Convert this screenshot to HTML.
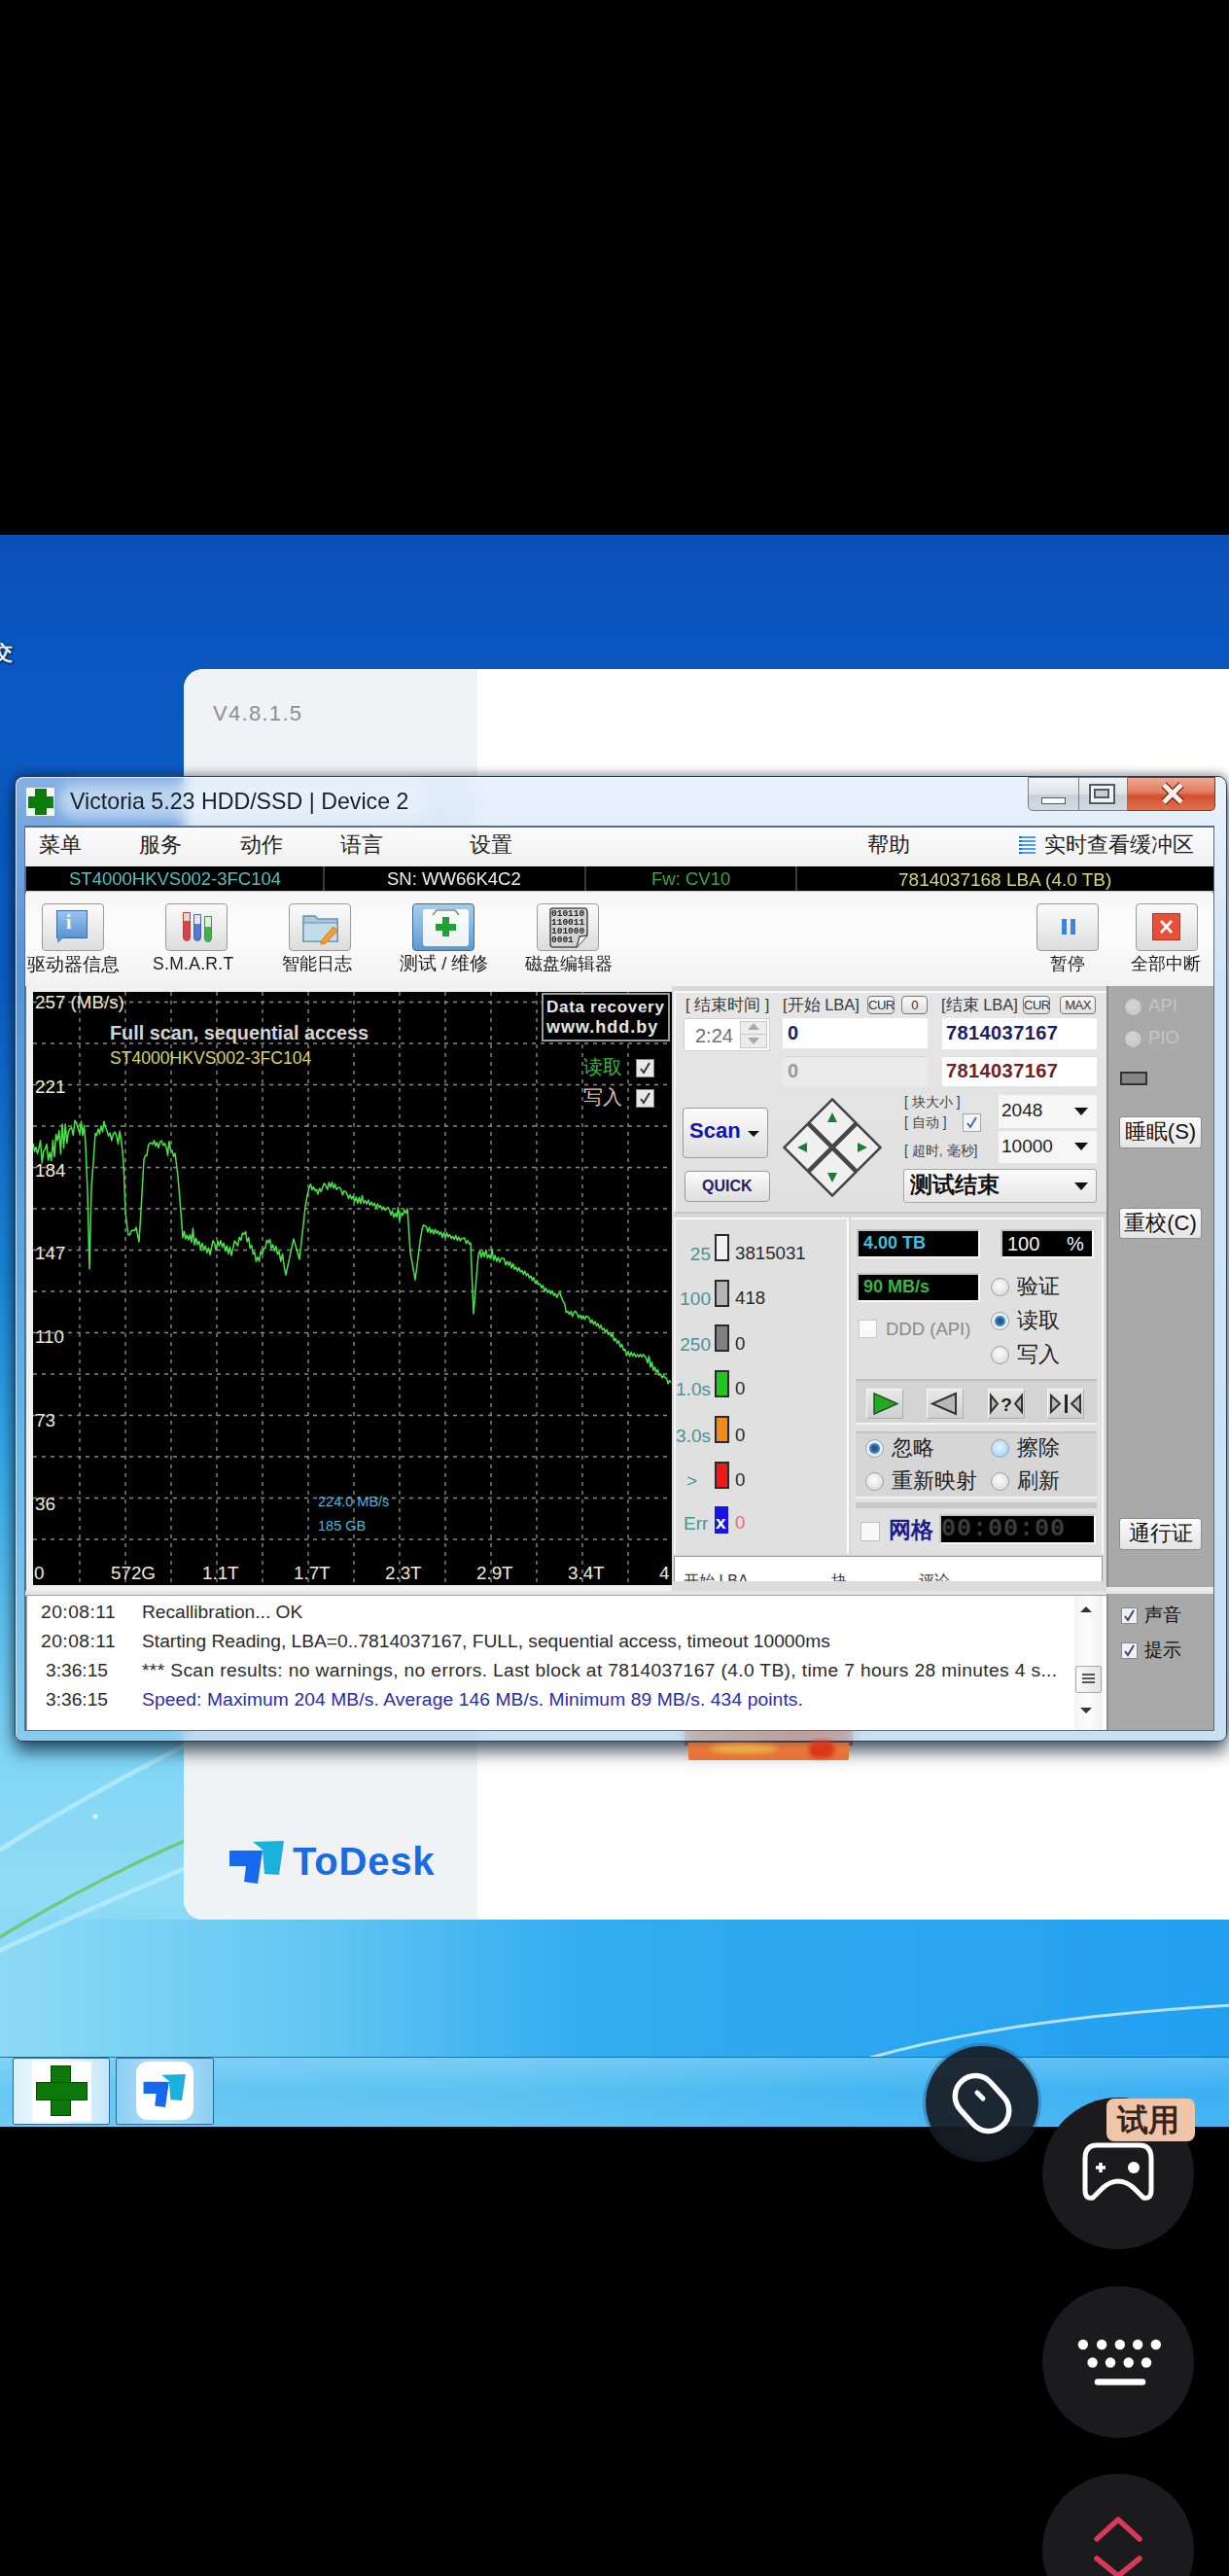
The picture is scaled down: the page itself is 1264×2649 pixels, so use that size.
<!DOCTYPE html>
<html><head><meta charset="utf-8">
<style>
*{margin:0;padding:0;box-sizing:border-box}
html,body{width:1264px;height:2649px;overflow:hidden;background:#000;font-family:"Liberation Sans",sans-serif}
.a{position:absolute}
#desk{position:absolute;left:0;top:550px;width:1264px;height:1637px;overflow:hidden;
background:linear-gradient(180deg,#0a50b8 0px,#0a58c0 150px,#0b5cc4 450px,#1a84d6 750px,#36aae8 950px,#80d6f6 1250px,#90dcf6 1400px,#74d0f4 1500px,#5cc8f4 1565px)}
#card{left:189px;top:688px;width:1100px;height:1286px;border-radius:20px;background:#fff;overflow:hidden}
#cardl{left:0;top:0;width:302px;height:1286px;background:#f0f2f5}
.t{position:absolute;white-space:nowrap;line-height:1}
/* window */
#win{left:15px;top:798px;width:1247px;height:993px;border-radius:9px 9px 8px 8px;
background:linear-gradient(180deg,rgba(218,234,252,.6) 0px,rgba(205,226,248,.56) 52px,rgba(160,202,238,.5) 200px,rgba(145,193,233,.5) 993px);border:1px solid #2c3c4c;backdrop-filter:blur(7px);box-shadow:inset 1px 1px 0 rgba(255,255,255,.7),0 10px 18px rgba(0,20,40,.7),0 -3px 10px rgba(0,0,0,.3)}
#client{left:25px;top:849px;width:1224px;height:931px;background:#f0f0f0;border:2px solid #5c6c7c}
#taskbar{left:0;top:2115px;width:1264px;height:72px;background:linear-gradient(180deg,rgba(255,255,255,.18),rgba(255,255,255,0) 50%,rgba(255,255,255,.06)),linear-gradient(90deg,#66c8f2 0px,#5cc2f2 500px,#44b6f2 900px,#3cb0f2 1264px);border-top:1px solid #2a6c98}
.btn{position:absolute;width:64px;height:49px;border:1px solid #9a9a9a;border-radius:4px;background:linear-gradient(180deg,#fbfbfb,#ececec 50%,#dcdcdc)}
.sb{position:absolute;height:19px;border:1px solid #777;border-radius:4px;background:linear-gradient(180deg,#fafafa,#e0e0e0);font-size:13px;line-height:17px;text-align:center;color:#333;letter-spacing:-0.5px}
.bx{position:absolute;left:735px;width:15px;height:28px;border:2px solid #2a2a2a}
.lcd{position:absolute;background:#000;border:2px solid #c4c4c4;border-right-color:#fafafa;border-bottom-color:#fafafa}
.rd{position:absolute;width:19px;height:19px;border-radius:50%;border:1px solid #a0a0a0;background:radial-gradient(circle at 45% 40%,#fdfdfd,#e0e0e0 70%,#cfcfcf)}
.rd.sel{background:radial-gradient(circle at 50% 50%,#2a5a8a 0 3px,#3a8ad0 4px 5px,#e8f0f8 6px)}
.pb{position:absolute;width:38px;height:31px;background:linear-gradient(180deg,#e8e8e8,#cfcfcf);border:1px solid #b0b0b0;border-top-color:#f8f8f8;border-left-color:#f8f8f8}
.gb{position:absolute;left:1151px;width:85px;border:1px solid #8c8c8c;border-radius:3px;background:linear-gradient(180deg,#fbfbfb,#e4e4e4);font-size:22px;line-height:30px;text-align:center;color:#111}
.circ{position:absolute;border-radius:50%;background:#1b1b1d}
</style></head><body>
<div id="desk">
<div class="a" style="left:0;top:1424px;width:1264px;height:141px;background:linear-gradient(90deg,#8cdaf6 0px,#66c8f2 300px,#34acf0 600px,#22a0f0 1264px)"></div>
<svg class="a" style="left:0;top:1150px" width="1264" height="480" viewBox="0 1700 1264 480">
<path d="M-20 1915 Q80 1850 200 1790" stroke="rgba(220,250,255,.45)" stroke-width="5" fill="none"/><circle cx="98" cy="1868" r="2.5" fill="rgba(255,255,255,.7)"/>
<path d="M-10 1998 Q100 1930 220 1880" stroke="#72c878" stroke-width="3.5" fill="none"/>
<path d="M-10 2010 Q120 1950 230 1905" stroke="rgba(220,250,255,.45)" stroke-width="5" fill="none"/>
<path d="M895 2116 Q1040 2075 1270 2062" stroke="rgba(230,248,255,.75)" stroke-width="3" fill="none"/>
</svg>
</div>
<div class="t" style="left:-7px;top:661px;color:#f0f8ff;font-size:20px;font-weight:700;text-shadow:1px 1px 2px #002050,0 0 3px #002050">交</div>
<div id="card" class="a"><div id="cardl" class="a"></div>
<div class="t" style="left:30px;top:35px;color:#8a9099;font-size:22px;letter-spacing:1.3px">V4.8.1.5</div>
</div>
<div class="a" style="left:704px;top:1740px;width:173px;height:55px;background:linear-gradient(90deg,#e8a878,#e89060 40%,#e87a50 70%,#e89070)"></div>
<div id="win" class="a"></div>
<div id="client" class="a"></div>
<div class="a" style="left:708px;top:1792px;width:165px;height:18px;background:linear-gradient(180deg,#c86a40,#e8783a 40%,#e87038);border-radius:0 0 2px 2px"></div>
<div class="a" style="left:730px;top:1794px;width:70px;height:9px;border-radius:50%;background:#e8b048;filter:blur(2.5px)"></div>
<div class="a" style="left:832px;top:1790px;width:26px;height:18px;border-radius:40%;background:#d83818;filter:blur(2px)"></div>

<!-- title bar -->
<div class="a" style="left:27px;top:810px;width:29px;height:29px;background:#f4f8f4"></div>
<div class="a" style="left:35.5px;top:811px;width:12px;height:27px;background:#0c7a0c"></div>
<div class="a" style="left:28.5px;top:818.5px;width:26px;height:12px;background:#0c7a0c"></div>
<div class="a" style="left:60px;top:806px;width:380px;height:36px;border-radius:18px;background:rgba(235,244,252,.55);filter:blur(6px)"></div>
<div class="t" style="left:72px;top:813px;font-size:23.2px;color:#15202c">Victoria 5.23 HDD/SSD | Device 2</div>
<div class="a" style="left:1057px;top:799px;width:53px;height:35px;border:1px solid #6e7f92;border-radius:0 0 0 5px;background:linear-gradient(180deg,#f2f4f6,#dde2e7 50%,#c8d0d8 51%,#d4dae0)"></div>
<div class="a" style="left:1071px;top:820px;width:25px;height:7px;border:1px solid #4f5e6e;background:#fff"></div>
<div class="a" style="left:1110px;top:799px;width:50px;height:35px;border:1px solid #6e7f92;border-left:none;background:linear-gradient(180deg,#f2f4f6,#dde2e7 50%,#c8d0d8 51%,#d4dae0)"></div>
<div class="a" style="left:1120px;top:806px;width:27px;height:21px;border:2px solid #4f5a66;background:#f0f2f4"></div>
<div class="a" style="left:1125px;top:811px;width:16px;height:10px;border:2px solid #4f5a66;background:#c8ced4"></div>
<div class="a" style="left:1160px;top:799px;width:90px;height:35px;border:1px solid #7a3a2a;border-left:none;border-radius:0 0 5px 0;background:linear-gradient(180deg,#f0a890,#e27a60 45%,#d4502c 55%,#e07050)"></div>
<svg class="a" style="left:1192px;top:803px" width="28" height="26" viewBox="0 0 28 26"><path d="M5 4 L23 22 M23 4 L5 22" stroke="#6a2a1a" stroke-width="7.5" stroke-linecap="butt"/><path d="M5 4 L23 22 M23 4 L5 22" stroke="#f4f0ee" stroke-width="5" stroke-linecap="butt"/></svg>
<!-- menu bar -->
<div class="a" style="left:26px;top:851px;width:1222px;height:40px;background:linear-gradient(180deg,#fbfbfb,#f0f0f0)"></div>
<div class="t" style="left:40px;top:858px;font-size:22px;color:#1e1e1e">菜单</div>
<div class="t" style="left:143px;top:858px;font-size:22px;color:#1e1e1e">服务</div>
<div class="t" style="left:247px;top:858px;font-size:22px;color:#1e1e1e">动作</div>
<div class="t" style="left:350px;top:858px;font-size:22px;color:#1e1e1e">语言</div>
<div class="t" style="left:483px;top:858px;font-size:22px;color:#1e1e1e">设置</div>
<div class="t" style="left:892px;top:858px;font-size:22px;color:#1e1e1e">帮助</div>
<div class="a" style="left:1048px;top:860px;width:17px;height:19px;background:repeating-linear-gradient(180deg,#4aa0e0 0 2px,transparent 2px 4px)"></div>
<div class="a" style="left:1048px;top:860px;width:3px;height:19px;background:repeating-linear-gradient(180deg,#1a70c0 0 2px,transparent 2px 4px)"></div>
<div class="t" style="left:1074px;top:858px;font-size:22px;color:#1e1e1e">实时查看缓冲区</div>
<!-- info bar -->
<div class="a" style="left:27px;top:891px;width:1221px;height:26px;background:#000;border-bottom:1px solid #c8c8c8"></div>
<div class="a" style="left:332px;top:891px;width:2px;height:25px;background:#3a3a3a"></div>
<div class="a" style="left:601px;top:891px;width:2px;height:25px;background:#3a3a3a"></div>
<div class="a" style="left:818px;top:891px;width:2px;height:25px;background:#3a3a3a"></div>
<div class="t" style="left:71px;top:895px;font-size:18.5px;color:#4cc4c4">ST4000HKVS002-3FC104</div>
<div class="t" style="left:398px;top:895px;font-size:18.5px;color:#f0f0f0">SN: WW66K4C2</div>
<div class="t" style="left:670px;top:895px;font-size:18.5px;color:#3ca83c">Fw: CV10</div>
<div class="t" style="left:924px;top:895px;font-size:19px;color:#d6d47a">7814037168 LBA (4.0 TB)</div>
<!-- toolbar -->
<div class="a" style="left:26px;top:918px;width:1222px;height:96px;background:linear-gradient(180deg,#f6f6f6,#fdfdfd 40%,#f2f2f2)"></div>
<div class="btn" style="left:43px;top:929px"></div>
<div class="btn" style="left:170px;top:929px"></div>
<div class="btn" style="left:297px;top:929px"></div>
<div class="btn" style="left:424px;top:929px;background:linear-gradient(180deg,#a8cce8,#7fb4e0 55%,#5a98d0);border-color:#3a6a98"></div>
<div class="btn" style="left:552px;top:929px"></div>
<div class="btn" style="left:1066px;top:929px"></div>
<div class="btn" style="left:1168px;top:929px"></div>
<!-- icons -->
<div class="a" style="left:58px;top:936px;width:32px;height:29px;background:linear-gradient(180deg,#9cc4ee,#5b93d4);border:1px solid #3a6aa8"></div>
<div class="a" style="left:59px;top:963px;width:0;height:0;border-left:8px solid #5b93d4;border-bottom:7px solid transparent"></div>
<div class="t" style="left:68px;top:938px;font-size:20px;font-weight:700;color:#fff;font-family:'Liberation Serif',serif">i</div>
<div class="a" style="left:188px;top:938px;width:8px;height:30px;border-radius:0 0 4px 4px;background:linear-gradient(180deg,#f0d0d0 0 30%,#e04040 30%);border:1px solid #a04848"></div>
<div class="a" style="left:199px;top:940px;width:8px;height:28px;border-radius:0 0 4px 4px;background:linear-gradient(180deg,#e0e8f8 0 35%,#5878d8 35%);border:1px solid #5060a0"></div>
<div class="a" style="left:210px;top:942px;width:8px;height:27px;border-radius:0 0 4px 4px;background:linear-gradient(180deg,#e0f0e0 0 40%,#40b048 40%);border:1px solid #488850"></div>
<svg class="a" style="left:309px;top:936px" width="42" height="36" viewBox="0 0 42 36">
<path d="M3 6 H15 L18 9 H38 V32 H3Z" fill="#a8cadc" stroke="#6a90a8" stroke-width="1.5"/>
<path d="M3 13 H38 V32 H3Z" fill="#c4dce8" stroke="#6a90a8" stroke-width="1.2"/>
<path d="M22 31 L34 17 L38 21 L26 34 L21 35Z" fill="#f0a030" stroke="#c87818" stroke-width="1"/>
</svg>
<div class="a" style="left:435px;top:935px;width:47px;height:38px;background:linear-gradient(180deg,#fdfdfd,#eef0f2);border-radius:3px"></div>
<svg class="a" style="left:435px;top:933px" width="47" height="10"><path d="M10 8 L14 3 H33 L37 8" fill="none" stroke="#7a8a98" stroke-width="1.5"/></svg>
<div class="a" style="left:455px;top:943px;width:7px;height:20px;background:#22a038"></div>
<div class="a" style="left:448px;top:950px;width:21px;height:7px;background:#22a038"></div>
<svg class="a" style="left:563px;top:932px" width="44" height="44" viewBox="0 0 44 44"><path d="M3 4 Q3 2 6 2 H38 Q41 2 41 6 V30 L30 42 H6 Q3 42 3 39Z" fill="#d4d4d4" stroke="#505050" stroke-width="1.6"/><path d="M41 30 L33 31 L30 42" fill="#f4f4f4" stroke="#505050" stroke-width="1.4"/></svg>
<div class="t" style="left:567px;top:935px;font-size:9.5px;line-height:9px;color:#222;font-weight:700;font-family:'Liberation Mono',monospace;white-space:pre">010110
110011
101000
0001</div>
<div class="a" style="left:1092px;top:945px;width:5px;height:16px;background:#3a86d8"></div>
<div class="a" style="left:1101px;top:945px;width:5px;height:16px;background:#3a86d8"></div>
<div class="a" style="left:1185px;top:939px;width:29px;height:28px;background:#e8503a;border:1px solid #c03020"></div>
<svg class="a" style="left:1190px;top:944px" width="19" height="18" viewBox="0 0 19 18"><path d="M4 3 L15 15 M15 3 L4 15" stroke="#fff" stroke-width="2.6"/></svg>
<div class="t" style="left:28px;top:982px;font-size:19px;color:#1a1a1a">驱动器信息</div>
<div class="t" style="left:157px;top:983px;font-size:17.5px;color:#1a1a1a;letter-spacing:0.3px">S.M.A.R.T</div>
<div class="t" style="left:290px;top:982px;font-size:18px;color:#1a1a1a">智能日志</div>
<div class="t" style="left:411px;top:982px;font-size:18.5px;color:#1a1a1a">测试 / 维修</div>
<div class="t" style="left:540px;top:982px;font-size:18px;color:#1a1a1a">磁盘编辑器</div>
<div class="t" style="left:1080px;top:982px;font-size:18px;color:#1a1a1a">暂停</div>
<div class="t" style="left:1163px;top:982px;font-size:18px;color:#1a1a1a">全部中断</div>
<svg class="a" style="left:34px;top:1020px" width="657" height="610" viewBox="0 0 657 610">
<rect width="657" height="610" fill="#000"/>
<g stroke="#8a8a8a" stroke-width="1.4" stroke-dasharray="4 5"><line x1="48" y1="0" x2="48" y2="610"/><line x1="95" y1="0" x2="95" y2="610"/><line x1="142" y1="0" x2="142" y2="610"/><line x1="189" y1="0" x2="189" y2="610"/><line x1="236" y1="0" x2="236" y2="610"/><line x1="283" y1="0" x2="283" y2="610"/><line x1="330" y1="0" x2="330" y2="610"/><line x1="377" y1="0" x2="377" y2="610"/><line x1="424" y1="0" x2="424" y2="610"/><line x1="471" y1="0" x2="471" y2="610"/><line x1="518" y1="0" x2="518" y2="610"/><line x1="565" y1="0" x2="565" y2="610"/><line x1="612" y1="0" x2="612" y2="610"/><line x1="0" y1="10.5" x2="657" y2="10.5"/><line x1="0" y1="53.0" x2="657" y2="53.0"/><line x1="0" y1="95.5" x2="657" y2="95.5"/><line x1="0" y1="138.0" x2="657" y2="138.0"/><line x1="0" y1="180.5" x2="657" y2="180.5"/><line x1="0" y1="223.0" x2="657" y2="223.0"/><line x1="0" y1="265.5" x2="657" y2="265.5"/><line x1="0" y1="308.0" x2="657" y2="308.0"/><line x1="0" y1="350.5" x2="657" y2="350.5"/><line x1="0" y1="393.0" x2="657" y2="393.0"/><line x1="0" y1="435.5" x2="657" y2="435.5"/><line x1="0" y1="478.0" x2="657" y2="478.0"/><line x1="0" y1="520.5" x2="657" y2="520.5"/><line x1="0" y1="563.0" x2="657" y2="563.0"/></g>
<path d="M0.0 156.0 L1.5 164.2 L3.0 159.6 L4.5 166.4 L6.0 160.7 L7.6 152.8 L9.2 175.9 L10.8 164.4 L12.4 161.6 L14.0 156.8 L15.6 173.3 L17.2 165.0 L18.8 173.6 L20.4 152.8 L22.0 169.6 L23.6 146.4 L25.2 152.9 L26.8 142.6 L28.4 166.5 L30.0 136.1 L31.6 160.7 L33.2 135.9 L34.8 155.4 L36.4 143.7 L38.0 140.6 L39.7 139.6 L41.3 147.6 L43.0 132.3 L44.7 134.7 L46.3 140.6 L48.0 145.3 L49.5 132.9 L51.0 147.8 L52.5 137.4 L54.0 156.0 L56.0 205.0 L58.0 285.0 L60.0 202.0 L62.0 175.0 L64.0 145.4 L65.5 147.6 L67.0 140.9 L68.5 145.9 L70.0 137.8 L71.5 144.0 L73.0 133.2 L74.5 139.5 L76.0 142.8 L77.6 148.2 L79.2 145.1 L80.8 152.8 L82.4 146.2 L84.0 144.1 L85.8 147.4 L87.5 156.4 L89.2 143.2 L91.0 155.0 L93.0 175.0 L95.0 226.0 L96.5 240.0 L98.0 249.9 L99.6 249.7 L101.2 245.4 L102.8 245.1 L104.4 245.8 L106.0 242.0 L107.5 249.5 L109.0 257.0 L110.7 229.7 L112.3 202.3 L114.0 172.4 L115.5 168.3 L117.0 168.2 L118.5 157.8 L120.0 155.8 L121.5 155.2 L123.0 156.7 L124.5 152.7 L126.0 158.5 L127.5 154.9 L129.0 160.4 L130.6 154.1 L132.2 153.0 L133.8 157.8 L135.4 155.9 L137.0 159.5 L138.5 168.2 L140.0 153.7 L141.5 162.8 L143.0 163.1 L144.5 169.2 L146.0 166.0 L147.5 178.0 L149.0 190.0 L150.7 210.0 L152.3 230.0 L154.0 252.8 L155.5 246.3 L157.0 254.0 L158.5 250.2 L160.0 255.0 L161.5 249.6 L163.0 257.4 L164.5 243.3 L166.0 260.2 L167.6 253.3 L169.2 259.9 L170.8 256.6 L172.4 264.4 L174.0 258.4 L175.6 265.6 L177.2 261.2 L178.8 268.2 L180.4 263.2 L182.0 270.4 L183.6 262.4 L185.1 255.7 L186.7 259.2 L188.3 265.7 L189.9 256.2 L191.4 261.2 L193.0 255.7 L194.6 262.6 L196.1 258.2 L197.7 266.5 L199.3 260.9 L200.9 269.3 L202.4 262.3 L204.0 271.0 L205.6 264.0 L207.2 255.9 L208.9 258.2 L210.5 261.1 L212.1 252.5 L213.8 255.3 L215.4 247.9 L217.0 249.1 L218.6 246.6 L220.1 256.8 L221.7 252.8 L223.2 263.6 L224.8 260.7 L226.3 269.8 L227.9 267.5 L229.4 277.2 L231.0 272.7 L232.6 277.1 L234.1 267.0 L235.7 269.7 L237.3 263.4 L238.9 263.6 L240.4 255.2 L242.0 257.8 L243.6 254.6 L245.1 264.1 L246.7 260.0 L248.3 266.6 L249.9 261.5 L251.4 269.9 L253.0 267.0 L254.8 277.2 L256.5 269.4 L258.2 282.2 L260.0 291.0 L261.6 283.6 L263.2 276.2 L264.8 268.8 L266.4 261.4 L268.0 254.0 L269.5 259.2 L271.0 264.5 L272.5 269.8 L274.0 275.0 L275.5 261.5 L277.0 248.0 L278.5 234.5 L280.0 221.0 L282.0 209.5 L284.0 201.3 L285.5 197.8 L287.0 203.6 L288.5 200.7 L290.0 204.5 L291.5 203.0 L293.0 208.1 L294.6 201.9 L296.2 205.4 L297.9 200.6 L299.5 196.9 L301.1 198.9 L302.8 203.3 L304.4 196.0 L306.0 201.1 L307.5 195.8 L309.1 201.9 L310.6 197.7 L312.2 203.4 L313.7 201.4 L315.2 201.1 L316.8 203.2 L318.3 208.9 L319.8 204.7 L321.4 205.3 L322.9 207.9 L324.5 212.4 L326.0 208.8 L327.6 212.9 L329.1 210.0 L330.7 215.8 L332.2 210.9 L333.8 217.2 L335.3 211.2 L336.9 217.5 L338.4 209.5 L340.0 217.2 L341.6 214.7 L343.2 218.1 L344.8 214.0 L346.4 219.3 L348.0 216.2 L349.6 219.8 L351.2 217.1 L352.8 222.6 L354.4 218.0 L356.0 221.8 L357.5 219.8 L359.0 223.9 L360.5 221.0 L362.0 224.5 L363.5 223.0 L365.0 221.5 L366.5 224.4 L368.0 229.2 L369.5 225.1 L371.0 231.8 L372.5 227.6 L374.0 231.7 L375.5 221.5 L377.0 235.2 L378.6 227.4 L380.2 229.8 L381.8 224.3 L383.4 227.8 L385.0 223.0 L386.5 245.5 L388.0 268.0 L389.7 277.3 L391.3 286.7 L393.0 296.0 L394.8 282.5 L396.5 269.0 L398.2 255.5 L400.0 244.5 L401.5 239.8 L403.0 240.6 L404.5 241.6 L406.0 247.1 L407.5 241.9 L409.0 247.7 L410.5 244.4 L412.0 248.9 L413.5 244.1 L415.0 248.2 L416.5 245.8 L418.0 249.7 L419.5 246.9 L421.0 252.4 L422.6 247.4 L424.1 252.6 L425.6 247.8 L427.1 252.1 L428.7 249.7 L430.2 253.6 L431.7 251.2 L433.2 254.5 L434.8 250.5 L436.3 255.5 L437.8 252.0 L439.3 256.0 L440.9 253.6 L442.4 253.5 L443.9 253.0 L445.4 258.7 L447.0 255.5 L448.5 259.1 L450.0 258.0 L451.5 294.5 L453.0 331.0 L454.7 310.3 L456.3 289.7 L458.0 270.4 L459.6 266.1 L461.1 272.9 L462.7 267.1 L464.2 272.4 L465.8 265.4 L467.4 273.6 L468.9 270.5 L470.5 274.1 L472.1 264.6 L473.6 276.0 L475.2 271.0 L476.8 277.0 L478.3 273.0 L479.9 278.1 L481.4 273.9 L483.0 274.1 L484.5 274.3 L486.0 280.7 L487.6 277.3 L489.1 280.9 L490.6 277.6 L492.1 284.0 L493.7 279.5 L495.2 285.3 L496.7 283.1 L498.2 286.9 L499.8 283.7 L501.3 287.9 L502.8 286.6 L504.3 290.3 L505.9 287.1 L507.4 291.9 L508.9 289.8 L510.4 294.0 L512.0 292.0 L513.5 296.9 L515.0 293.6 L516.6 299.6 L518.1 296.9 L519.7 300.8 L521.3 300.2 L522.9 304.3 L524.4 301.7 L526.0 307.8 L527.6 304.8 L529.2 309.2 L530.8 306.9 L532.4 310.4 L534.0 307.8 L535.6 312.2 L537.2 310.2 L538.8 314.2 L540.4 310.5 L542.0 309.4 L543.6 314.4 L545.2 318.1 L546.8 320.8 L548.4 329.5 L550.0 328.6 L551.6 331.6 L553.2 328.5 L554.8 333.7 L556.3 329.2 L557.9 328.3 L559.5 331.1 L561.1 335.2 L562.7 332.2 L564.2 336.0 L565.8 333.0 L567.4 336.6 L569.0 333.3 L570.5 334.1 L572.0 335.2 L573.5 340.4 L575.0 337.3 L576.5 341.7 L578.0 339.0 L579.5 343.3 L581.0 341.1 L582.5 345.9 L584.0 342.7 L585.5 347.6 L587.0 345.9 L588.5 350.0 L590.0 347.3 L591.5 352.2 L593.0 350.3 L594.5 354.3 L596.0 351.5 L597.6 358.8 L599.2 356.5 L600.8 361.5 L602.4 358.7 L604.0 365.2 L605.6 362.5 L607.2 368.3 L608.8 367.5 L610.4 373.9 L612.0 370.0 L613.6 374.7 L615.1 370.4 L616.7 374.3 L618.2 371.7 L619.8 375.2 L621.3 372.8 L622.9 375.4 L624.4 372.7 L626.0 375.3 L627.5 372.9 L629.0 374.2 L630.5 377.0 L632.0 381.6 L633.5 374.6 L635.0 386.0 L636.5 380.8 L638.0 389.4 L639.5 385.7 L641.0 391.3 L642.5 388.4 L644.0 394.3 L645.5 392.9 L647.0 396.9 L648.5 394.2 L650.0 397.0 L651.5 397.1 L653.0 402.9 L654.5 399.6 L656.0 402.0" fill="none" stroke="#46e446" stroke-width="1.5" stroke-linejoin="round"/>
</svg>
<div class="t" style="left:36px;top:1022px;font-size:18.8px;color:#f0ecd0">257 (MB/s)</div>
<div class="t" style="left:36px;top:1109px;font-size:18.8px;color:#f0ecd0">221</div>
<div class="t" style="left:36px;top:1195px;font-size:18.8px;color:#f0ecd0">184</div>
<div class="t" style="left:36px;top:1280px;font-size:18.8px;color:#f0ecd0">147</div>
<div class="t" style="left:36px;top:1366px;font-size:18.8px;color:#f0ecd0">110</div>
<div class="t" style="left:36px;top:1452px;font-size:18.8px;color:#f0ecd0">73</div>
<div class="t" style="left:36px;top:1538px;font-size:18.8px;color:#f0ecd0">36</div>
<div class="t" style="left:35px;top:1609px;font-size:18.8px;color:#f0ecd0">0</div>
<div class="t" style="left:114px;top:1609px;font-size:18.8px;color:#f0ecd0">572G</div>
<div class="t" style="left:208px;top:1609px;font-size:18.8px;color:#f0ecd0">1.1T</div>
<div class="t" style="left:302px;top:1609px;font-size:18.8px;color:#f0ecd0">1.7T</div>
<div class="t" style="left:396px;top:1609px;font-size:18.8px;color:#f0ecd0">2.3T</div>
<div class="t" style="left:490px;top:1609px;font-size:18.8px;color:#f0ecd0">2.9T</div>
<div class="t" style="left:584px;top:1609px;font-size:18.8px;color:#f0ecd0">3.4T</div>
<div class="t" style="left:678px;top:1609px;font-size:18.8px;color:#f0ecd0">4</div>
<div class="t" style="left:113px;top:1053px;font-size:19.8px;font-weight:700;color:#d4d4d4">Full scan, sequential access</div>
<div class="t" style="left:113px;top:1080px;font-size:17.6px;color:#d8d464">ST4000HKVS002-3FC104</div>
<div class="a" style="left:557px;top:1021px;width:132px;height:50px;border:2px solid #9a9a9a;background:#000"></div>
<div class="t" style="left:562px;top:1027px;font-size:17px;font-weight:700;color:#e8e8e8;letter-spacing:0.7px">Data recovery</div>
<div class="t" style="left:562px;top:1047px;font-size:18px;font-weight:700;color:#e0e8e0;letter-spacing:1px">www.hdd.by</div>
<div class="t" style="left:600px;top:1087px;font-size:20px;color:#3cb83c">读取</div>
<div class="a" style="left:654px;top:1089px;width:19px;height:19px;background:#e8e8e8;border:1px solid #888"></div>
<svg class="a" style="left:656px;top:1091px" width="15" height="15"><path d="M3 8 L6 12 L12 2" stroke="#333" stroke-width="2" fill="none"/></svg>
<div class="t" style="left:600px;top:1118px;font-size:20px;color:#dcc4bc">写入</div>
<div class="a" style="left:654px;top:1120px;width:19px;height:19px;background:#e8e8e8;border:1px solid #888"></div>
<svg class="a" style="left:656px;top:1122px" width="15" height="15"><path d="M3 8 L6 12 L12 2" stroke="#333" stroke-width="2" fill="none"/></svg>
<div class="t" style="left:327px;top:1537px;font-size:14.5px;color:#4ab8d8">224.0 MB/s</div>
<div class="t" style="left:327px;top:1562px;font-size:14.5px;color:#4ab8d8">185 GB</div>
<!-- right control panel -->
<div class="a" style="left:691px;top:1014px;width:449px;height:622px;background:#d8d8d8"></div>
<div class="a" style="left:693px;top:1019px;width:445px;height:229px;background:linear-gradient(180deg,#e6e6e6,#e0e0e0);border-top:2px solid #f8f8f8;border-left:2px solid #f8f8f8;border-bottom:2px solid #c4c4c4"></div>
<div class="t" style="left:705px;top:1025px;font-size:16.5px;color:#3a3a3a">[ 结束时间 ]</div>
<div class="t" style="left:805px;top:1025px;font-size:16.5px;color:#3a3a3a">[开始 LBA]</div>
<div class="sb" style="left:892px;top:1024px;width:28px">CUR</div>
<div class="sb" style="left:927px;top:1024px;width:27px">0</div>
<div class="t" style="left:968px;top:1025px;font-size:16.5px;color:#3a3a3a">[结束 LBA]</div>
<div class="sb" style="left:1052px;top:1024px;width:28px">CUR</div>
<div class="sb" style="left:1090px;top:1024px;width:37px">MAX</div>
<div class="a" style="left:703px;top:1047px;width:89px;height:34px;background:#fff;border:1px solid #cfcfcf"></div>
<div class="t" style="left:715px;top:1055px;font-size:20px;color:#6e6e6e">2:24</div>
<div class="a" style="left:761px;top:1050px;width:28px;height:28px;background:#ececec;border:1px solid #c8c8c8"></div>
<div class="a" style="left:762px;top:1063px;width:26px;height:1px;background:#c8c8c8"></div>
<div class="a" style="left:769px;top:1052px;width:0;height:0;border-left:6px solid transparent;border-right:6px solid transparent;border-bottom:7px solid #a8a8a8"></div>
<div class="a" style="left:769px;top:1067px;width:0;height:0;border-left:6px solid transparent;border-right:6px solid transparent;border-top:7px solid #a8a8a8"></div>
<div class="a" style="left:805px;top:1047px;width:149px;height:31px;background:#fff"></div>
<div class="t" style="left:810px;top:1052px;font-size:20px;font-weight:700;color:#1c1c64">0</div>
<div class="a" style="left:805px;top:1086px;width:149px;height:31px;background:#ebebeb;border-top:1px solid #d4d4d4"></div>
<div class="t" style="left:810px;top:1091px;font-size:20px;font-weight:700;color:#9a9a9a">0</div>
<div class="a" style="left:969px;top:1047px;width:159px;height:32px;background:#fff"></div>
<div class="t" style="left:973px;top:1052px;font-size:20px;font-weight:700;color:#1c1c64;letter-spacing:0.4px">7814037167</div>
<div class="a" style="left:969px;top:1086px;width:159px;height:31px;background:#fff;border-top:1px solid #dcdcdc"></div>
<div class="t" style="left:973px;top:1091px;font-size:20px;font-weight:700;color:#6a2222;letter-spacing:0.4px">7814037167</div>
<!-- scan / quick -->
<div class="a" style="left:702px;top:1139px;width:88px;height:52px;border:1px solid #9c9c9c;border-radius:4px;background:linear-gradient(180deg,#fdfdfd,#ececec 50%,#dedede)"></div>
<div class="t" style="left:709px;top:1152px;font-size:22px;font-weight:700;color:#1414b4">Scan</div>
<div class="a" style="left:769px;top:1163px;width:0;height:0;border-left:6px solid transparent;border-right:6px solid transparent;border-top:6px solid #111"></div>
<div class="a" style="left:704px;top:1204px;width:88px;height:32px;border:1px solid #9c9c9c;border-radius:4px;background:linear-gradient(180deg,#fdfdfd,#ececec 50%,#dedede)"></div>
<div class="t" style="left:722px;top:1212px;font-size:16px;font-weight:700;color:#22226a">QUICK</div>
<!-- diamond -->
<svg class="a" style="left:805px;top:1129px" width="102" height="102" viewBox="0 0 102 102">
<g transform="rotate(45 51 51)">
<rect x="16" y="16" width="34" height="34" fill="#f0f0f0" stroke="#444" stroke-width="2.5"/>
<rect x="52" y="16" width="34" height="34" fill="#f0f0f0" stroke="#444" stroke-width="2.5"/>
<rect x="16" y="52" width="34" height="34" fill="#f0f0f0" stroke="#444" stroke-width="2.5"/>
<rect x="52" y="52" width="34" height="34" fill="#f0f0f0" stroke="#444" stroke-width="2.5"/>
</g>
<path d="M51 15 L56 25 L46 25Z M51 87 L56 77 L46 77Z M15 51 L25 46 L25 56Z M87 51 L77 46 L77 56Z" fill="#1f7a3a"/>
</svg>
<div class="t" style="left:930px;top:1126px;font-size:14px;color:#444">[ 块大小 ]</div>
<div class="t" style="left:930px;top:1147px;font-size:14px;color:#444">[ 自动 ]</div>
<div class="a" style="left:990px;top:1145px;width:19px;height:19px;background:#f4f4f8;border:1px solid #9aa"></div>
<svg class="a" style="left:992px;top:1147px" width="15" height="15"><path d="M3 8 L6 12 L12 2" stroke="#5068a8" stroke-width="2" fill="none"/></svg>
<div class="t" style="left:930px;top:1176px;font-size:14px;color:#444">[ 超时, 毫秒]</div>
<div class="a" style="left:1027px;top:1126px;width:101px;height:34px;background:#f6f6f6"></div>
<div class="t" style="left:1030px;top:1132px;font-size:19px;color:#222">2048</div>
<div class="a" style="left:1105px;top:1139px;width:0;height:0;border-left:7px solid transparent;border-right:7px solid transparent;border-top:8px solid #111"></div>
<div class="a" style="left:1027px;top:1163px;width:101px;height:33px;background:#f6f6f6"></div>
<div class="t" style="left:1030px;top:1169px;font-size:19px;color:#222">10000</div>
<div class="a" style="left:1105px;top:1175px;width:0;height:0;border-left:7px solid transparent;border-right:7px solid transparent;border-top:8px solid #111"></div>
<div class="a" style="left:929px;top:1202px;width:199px;height:35px;border:1px solid #a8a8a8;border-radius:3px;background:linear-gradient(180deg,#fafafa,#e6e6e6)"></div>
<div class="t" style="left:936px;top:1207px;font-size:23px;font-weight:700;color:#111">测试结束</div>
<div class="a" style="left:1105px;top:1216px;width:0;height:0;border-left:7px solid transparent;border-right:7px solid transparent;border-top:8px solid #111"></div>
<!-- block stats -->
<div class="a" style="left:693px;top:1252px;width:180px;height:346px;background:#e0e0e0;border-top:2px solid #f6f6f6;border-left:2px solid #f6f6f6;border-right:2px solid #fafafa"></div>
<div class="t" style="right:533px;top:1280px;font-size:19px;color:#4a9494">25</div>
<div class="t" style="right:533px;top:1326px;font-size:19px;color:#4a9494">100</div>
<div class="t" style="right:533px;top:1373px;font-size:19px;color:#4a9494">250</div>
<div class="t" style="right:533px;top:1419px;font-size:19px;color:#4a9494">1.0s</div>
<div class="t" style="right:533px;top:1467px;font-size:19px;color:#4a9494">3.0s</div>
<div class="t" style="left:706px;top:1513px;font-size:19px;color:#4a9494">&gt;</div>
<div class="t" style="left:703px;top:1557px;font-size:19px;color:#4a9494">Err</div>
<div class="bx" style="top:1269px;background:#f2f2f2"></div>
<div class="bx" style="top:1316px;background:#b4b4b4"></div>
<div class="bx" style="top:1362px;background:#808080"></div>
<div class="bx" style="top:1409px;background:#1ec81e"></div>
<div class="bx" style="top:1456px;background:#f28a1a"></div>
<div class="bx" style="top:1503px;background:#f01818"></div>
<div class="a" style="left:735px;top:1549px;width:14px;height:28px;background:#1414e6"></div>
<div class="t" style="left:736px;top:1556px;font-size:19px;font-weight:700;color:#fff">x</div>
<div class="t" style="left:756px;top:1280px;font-size:18.7px;color:#2a2a2a">3815031</div>
<div class="t" style="left:756px;top:1326px;font-size:18.7px;color:#2a2a2a">418</div>
<div class="t" style="left:756px;top:1373px;font-size:18.7px;color:#2a2a2a">0</div>
<div class="t" style="left:756px;top:1419px;font-size:18.7px;color:#2a2a2a">0</div>
<div class="t" style="left:756px;top:1467px;font-size:18.7px;color:#2a2a2a">0</div>
<div class="t" style="left:756px;top:1513px;font-size:18.7px;color:#2a2a2a">0</div>
<div class="t" style="left:756px;top:1557px;font-size:18.7px;color:#e87060">0</div>
<!-- right sub panel -->
<div class="a" style="left:875px;top:1252px;width:260px;height:346px;background:#e0e0e0;border-top:2px solid #f6f6f6;border-right:2px solid #f6f6f6"></div>
<div class="lcd" style="left:881px;top:1264px;width:127px;height:30px"></div>
<div class="t" style="left:888px;top:1269px;font-size:18px;font-weight:700;color:#3cc0e8">4.00 TB</div>
<div class="lcd" style="left:1029px;top:1264px;width:96px;height:30px"></div>
<div class="t" style="left:1036px;top:1269px;font-size:20px;color:#f4f4f4">100</div>
<div class="t" style="left:1097px;top:1269px;font-size:20px;color:#f4f4f4">%</div>
<div class="lcd" style="left:881px;top:1309px;width:127px;height:30px"></div>
<div class="t" style="left:888px;top:1314px;font-size:18px;font-weight:700;color:#3cb43c">90 MB/s</div>
<div class="a" style="left:883px;top:1357px;width:19px;height:19px;background:#fafafa;border:1px solid #c8c8c8"></div>
<div class="t" style="left:911px;top:1358px;font-size:18.5px;color:#8a8a8a">DDD (API)</div>
<div class="rd" style="left:1019px;top:1314px"></div>
<div class="t" style="left:1046px;top:1312px;font-size:22px;color:#222">验证</div>
<div class="rd sel" style="left:1019px;top:1349px"></div>
<div class="t" style="left:1046px;top:1347px;font-size:22px;color:#222">读取</div>
<div class="rd" style="left:1019px;top:1384px"></div>
<div class="t" style="left:1046px;top:1382px;font-size:22px;color:#222">写入</div>
<!-- play panel -->
<div class="a" style="left:880px;top:1418px;width:248px;height:47px;background:#d4d4d4;border-top:2px solid #c0c0c0;border-bottom:2px solid #f4f4f4"></div>
<div class="pb" style="left:891px;top:1428px"></div>
<div class="pb" style="left:953px;top:1428px"></div>
<div class="pb" style="left:1016px;top:1428px"></div>
<div class="pb" style="left:1077px;top:1428px"></div>
<svg class="a" style="left:891px;top:1428px" width="38" height="31"><path d="M8 5 L32 15.5 L8 26Z" fill="#22aa22" stroke="#225522" stroke-width="1.5"/></svg>
<svg class="a" style="left:953px;top:1428px" width="38" height="31"><path d="M30 5 L6 15.5 L30 26Z" fill="#b8b8b8" stroke="#333" stroke-width="2"/></svg>
<svg class="a" style="left:1016px;top:1428px" width="38" height="31"><path d="M3 7 L10 15.5 L3 24Z M35 7 L28 15.5 L35 24Z" fill="#b8b8b8" stroke="#333" stroke-width="2"/><text x="19" y="23" font-size="19" font-weight="700" text-anchor="middle" fill="#222" font-family="Liberation Sans">?</text></svg>
<svg class="a" style="left:1077px;top:1428px" width="38" height="31"><path d="M4 7 L13 15.5 L4 24Z M34 7 L25 15.5 L34 24Z" fill="#b8b8b8" stroke="#333" stroke-width="2"/><rect x="18" y="6" width="3" height="19" fill="#222"/></svg>
<!-- radio panel -->
<div class="a" style="left:880px;top:1472px;width:248px;height:69px;background:#d6d6d6;border-top:2px solid #c4c4c4;border-bottom:2px solid #f4f4f4"></div>
<div class="rd sel" style="left:890px;top:1480px"></div>
<div class="t" style="left:917px;top:1478px;font-size:22px;color:#222">忽略</div>
<div class="rd" style="left:890px;top:1514px"></div>
<div class="t" style="left:917px;top:1512px;font-size:22px;color:#222">重新映射</div>
<div class="rd" style="left:1019px;top:1480px;background:radial-gradient(circle at 45% 40%,#e8f6ff,#a8d8f4 70%,#c8e4f4)"></div>
<div class="t" style="left:1046px;top:1478px;font-size:22px;color:#222">擦除</div>
<div class="rd" style="left:1019px;top:1514px"></div>
<div class="t" style="left:1046px;top:1512px;font-size:22px;color:#222">刷新</div>
<div class="a" style="left:880px;top:1545px;width:248px;height:6px;background:#c8c8c8"></div>
<div class="a" style="left:885px;top:1565px;width:20px;height:20px;background:#f8f8f8;border:1px solid #c0c0c0"></div>
<div class="t" style="left:914px;top:1562px;font-size:23px;font-weight:700;color:#1c1c8c">网格</div>
<div class="lcd" style="left:966px;top:1557px;width:161px;height:31px"></div>
<div class="t" style="left:968px;top:1560px;font-size:25px;font-weight:700;color:#3c3c3c;font-family:'Liberation Mono',monospace;letter-spacing:1px">00:00:00</div>
<!-- table header -->
<div class="a" style="left:693px;top:1600px;width:441px;height:28px;background:#fff;border:1px solid #9a9a9a;border-bottom:none"></div>
<div class="a" style="left:693px;top:1626px;width:441px;height:10px;background:#dcdcdc"></div>
<div class="t" style="left:703px;top:1614px;height:12px;overflow:hidden;font-size:16px;color:#333;line-height:24px">开始 LBA</div>
<div class="t" style="left:855px;top:1614px;height:12px;overflow:hidden;font-size:16px;color:#333;line-height:24px">块</div>
<div class="t" style="left:945px;top:1614px;height:12px;overflow:hidden;font-size:16px;color:#333;line-height:24px">评论</div>
<!-- far right gray panel -->
<div class="a" style="left:1138px;top:1014px;width:110px;height:620px;background:#a9a9a9;border-left:2px solid #8a8a8a"></div>
<div class="rd" style="left:1156px;top:1026px;opacity:.55"></div>
<div class="t" style="left:1181px;top:1025px;font-size:18.5px;color:#c4c4c4">API</div>
<div class="rd" style="left:1156px;top:1059px;opacity:.55"></div>
<div class="t" style="left:1181px;top:1058px;font-size:18.5px;color:#c4c4c4">PIO</div>
<div class="a" style="left:1152px;top:1102px;width:28px;height:14px;background:#858585;border:2px solid #333"></div>
<div class="gb" style="top:1148px;height:33px">睡眠(S)</div>
<div class="gb" style="top:1242px;height:32px">重校(C)</div>
<div class="gb" style="top:1561px;height:33px">通行证</div>
<div class="a" style="left:1138px;top:1632px;width:110px;height:7px;background:#ececec"></div>
<!-- log -->
<div class="a" style="left:26px;top:1636px;width:1222px;height:5px;background:#e4e4e4"></div>
<div class="a" style="left:27px;top:1640px;width:1111px;height:139px;background:#fff;border-top:1px solid #a0a0a0;border-left:1px solid #a0a0a0"></div>
<div class="t" style="left:42px;top:1648px;font-size:19.2px;color:#2a2a2a;letter-spacing:0.5px">20:08:11</div>
<div class="t" style="left:146px;top:1648px;font-size:19.2px;color:#2a2a2a">Recallibration... OK</div>
<div class="t" style="left:42px;top:1678px;font-size:19.2px;color:#2a2a2a;letter-spacing:0.5px">20:08:11</div>
<div class="t" style="left:146px;top:1678px;font-size:19.2px;color:#2a2a2a">Starting Reading, LBA=0..7814037167, FULL, sequential access, timeout 10000ms</div>
<div class="t" style="left:47px;top:1708px;font-size:19.2px;color:#2a2a2a">3:36:15</div>
<div class="t" style="left:146px;top:1708px;font-size:19.2px;color:#2a2a2a;letter-spacing:0.37px">*** Scan results: no warnings, no errors. Last block at 7814037167 (4.0 TB), time 7 hours 28 minutes 4 s...</div>
<div class="t" style="left:47px;top:1738px;font-size:19.2px;color:#2a2a2a">3:36:15</div>
<div class="t" style="left:146px;top:1738px;font-size:19.2px;color:#2a2ab0;letter-spacing:0.12px">Speed: Maximum 204 MB/s. Average 146 MB/s. Minimum 89 MB/s. 434 points.</div>
<div class="a" style="left:1105px;top:1641px;width:29px;height:138px;background:linear-gradient(90deg,#f4f4f4,#fcfcfc 50%,#f0f0f0)"></div>
<div class="a" style="left:1111px;top:1652px;width:0;height:0;border-left:6px solid transparent;border-right:6px solid transparent;border-bottom:6px solid #333"></div>
<div class="a" style="left:1111px;top:1756px;width:0;height:0;border-left:6px solid transparent;border-right:6px solid transparent;border-top:6px solid #333"></div>
<div class="a" style="left:1106px;top:1713px;width:27px;height:28px;border:1px solid #a8a8a8;border-radius:2px;background:linear-gradient(90deg,#f8f8f8,#e4e4e4)"></div>
<div class="a" style="left:1113px;top:1721px;width:13px;height:12px;background:repeating-linear-gradient(180deg,#555 0 2px,transparent 2px 4px)"></div>
<div class="a" style="left:1138px;top:1639px;width:110px;height:140px;background:#a9a9a9;border-left:2px solid #8e8e8e"></div>
<div class="a" style="left:1153px;top:1653px;width:17px;height:17px;background:#f0f0f6;border:1px solid #888"></div>
<svg class="a" style="left:1154px;top:1654px" width="15" height="15"><path d="M3 8 L6 12 L12 2" stroke="#44446a" stroke-width="2" fill="none"/></svg>
<div class="t" style="left:1177px;top:1651px;font-size:19px;color:#111">声音</div>
<div class="a" style="left:1153px;top:1689px;width:17px;height:17px;background:#f0f0f6;border:1px solid #888"></div>
<svg class="a" style="left:1154px;top:1690px" width="15" height="15"><path d="M3 8 L6 12 L12 2" stroke="#44446a" stroke-width="2" fill="none"/></svg>
<div class="t" style="left:1177px;top:1687px;font-size:19px;color:#111">提示</div>
<!-- todesk logo -->
<svg class="a" style="left:234px;top:1890px" width="62" height="50" viewBox="0 0 62 50">
<path d="M26 4 L58 3 L53 38 L38 37 L36 12Z" fill="#1ab0dc"/>
<path d="M2 13 L36 13 L31 47 L17 45 L19 29 L2 29Z" fill="#1668ee"/>
</svg>
<div class="t" style="left:301px;top:1894px;font-size:40px;font-weight:700;color:#1a6ae6;letter-spacing:0.8px">ToDesk</div>
<div id="taskbar" class="a"></div>
<!-- taskbar buttons -->
<div class="a" style="left:13px;top:2116px;width:100px;height:69px;border:1px solid #2a6a9a;border-radius:2px;background:linear-gradient(90deg,#d8f0fc,#f4fbff 40%,#c4e6f8)"></div>
<div class="a" style="left:33px;top:2120px;width:61px;height:61px;background:#fff"></div>
<div class="a" style="left:52px;top:2124px;width:21px;height:52px;background:#0c780c;border:1px solid #064a06"></div>
<div class="a" style="left:37px;top:2141px;width:53px;height:19px;background:#0c780c;border:1px solid #064a06"></div>
<div class="a" style="left:53px;top:2142px;width:19px;height:17px;background:#0c780c"></div>
<div class="a" style="left:119px;top:2116px;width:101px;height:69px;border:1px solid #2a6a9a;border-radius:2px;background:linear-gradient(90deg,#8cd0f4,#b4e0f8 50%,#8ccef2)"></div>
<div class="a" style="left:140px;top:2120px;width:59px;height:60px;border-radius:12px;background:#fff"></div>
<svg class="a" style="left:146px;top:2129px" width="48" height="42" viewBox="0 0 62 50">
<path d="M26 4 L58 3 L53 38 L38 37 L36 12Z" fill="#1ab0dc"/>
<path d="M2 13 L36 13 L31 47 L17 45 L19 29 L2 29Z" fill="#1668ee"/>
</svg>
<!-- floating buttons -->
<div class="circ" style="left:952px;top:2104px;width:116px;height:116px;background:rgba(24,28,36,.92);box-shadow:0 0 0 3px rgba(40,80,120,.35)"></div>
<svg class="a" style="left:970px;top:2122px" width="80" height="80" viewBox="0 0 80 80">
<rect x="19" y="10" width="42" height="62" rx="21" ry="21" transform="rotate(-42 40 41)" fill="none" stroke="#fff" stroke-width="5.5"/>
<path d="M35 30 L41 36" stroke="#fff" stroke-width="5" stroke-linecap="round"/>
</svg>
<div class="circ" style="left:1072px;top:2157px;width:156px;height:156px;background:#1b1b1d"></div>
<svg class="a" style="left:1110px;top:2200px" width="80" height="70" viewBox="0 0 80 70">
<path d="M18 6 H62 Q74 6 74 20 V52 Q74 62 66 60 L56 50 Q40 36 24 50 L14 60 Q6 62 6 52 V20 Q6 6 18 6Z" fill="none" stroke="#fff" stroke-width="5" stroke-linejoin="round"/>
<path d="M22 24 V34 M17 29 H27" stroke="#fff" stroke-width="3.5"/>
<circle cx="56" cy="29" r="6" fill="#fff"/>
</svg>
<div class="a" style="left:1138px;top:2158px;width:91px;height:44px;border-radius:8px;background:#f0c4a8"></div>
<div class="t" style="left:1149px;top:2164px;font-size:32px;font-weight:700;color:#3a2418">试用</div>
<div class="circ" style="left:1072px;top:2351px;width:156px;height:156px;background:#1b1b1d"></div>
<svg class="a" style="left:1100px;top:2390px" width="100" height="70" viewBox="0 0 100 70">
<g fill="#fff"><circle cx="13.9" cy="21" r="5.2"/><circle cx="33.1" cy="21" r="5.2"/><circle cx="51.8" cy="21" r="5.2"/><circle cx="70.1" cy="21" r="5.2"/><circle cx="88.8" cy="21" r="5.2"/>
<circle cx="23.6" cy="39.5" r="5.2"/><circle cx="42" cy="39.5" r="5.2"/><circle cx="60.7" cy="39.5" r="5.2"/><circle cx="79" cy="39.5" r="5.2"/></g>
<path d="M29 59.5 H75" stroke="#fff" stroke-width="6.5" stroke-linecap="round"/>
</svg>
<div class="circ" style="left:1072px;top:2544px;width:156px;height:156px;background:#1b1b1d"></div>
<svg class="a" style="left:1120px;top:2585px" width="60" height="64" viewBox="0 0 60 64">
<path d="M8 26 L30 6 L52 26 M8 46 L30 64 L52 46" fill="none" stroke="#d8385a" stroke-width="5.5" stroke-linecap="round" stroke-linejoin="round"/>
</svg>





</body></html>
